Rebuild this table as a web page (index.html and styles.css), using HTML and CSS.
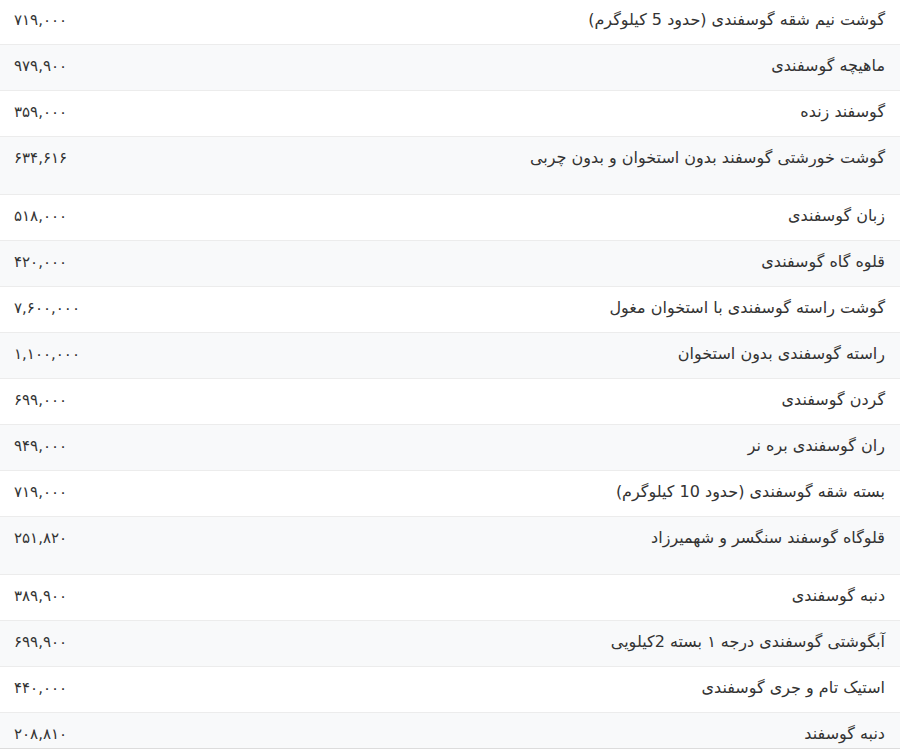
FILE: index.html
```html
<!DOCTYPE html>
<html lang="fa" dir="rtl">
<head>
<meta charset="utf-8">
<title>قیمت گوشت گوسفندی</title>
<link rel="stylesheet" href="styles.css">
</head>
<body>
<div class="list">
  <div class="row"><span class="name">گوشت نیم شقه گوسفندی (حدود 5 کیلوگرم)</span><span class="price">۷۱۹,۰۰۰</span></div>
  <div class="row"><span class="name">ماهیچه گوسفندی</span><span class="price">۹۷۹,۹۰۰</span></div>
  <div class="row"><span class="name">گوسفند زنده</span><span class="price">۳۵۹,۰۰۰</span></div>
  <div class="row tall"><span class="name">گوشت خورشتی گوسفند بدون استخوان و بدون چربی</span><span class="price">۶۳۴,۶۱۶</span></div>
  <div class="row"><span class="name">زبان گوسفندی</span><span class="price">۵۱۸,۰۰۰</span></div>
  <div class="row"><span class="name">قلوه گاه گوسفندی</span><span class="price">۴۲۰,۰۰۰</span></div>
  <div class="row"><span class="name">گوشت راسته گوسفندی با استخوان مغول</span><span class="price">۷,۶۰۰,۰۰۰</span></div>
  <div class="row"><span class="name">راسته گوسفندی بدون استخوان</span><span class="price">۱,۱۰۰,۰۰۰</span></div>
  <div class="row"><span class="name">گردن گوسفندی</span><span class="price">۶۹۹,۰۰۰</span></div>
  <div class="row"><span class="name">ران گوسفندی بره نر</span><span class="price">۹۴۹,۰۰۰</span></div>
  <div class="row"><span class="name">بسته شقه گوسفندی (حدود 10 کیلوگرم)</span><span class="price">۷۱۹,۰۰۰</span></div>
  <div class="row tall"><span class="name">قلوگاه گوسفند سنگسر و شهمیرزاد</span><span class="price">۲۵۱,۸۲۰</span></div>
  <div class="row"><span class="name">دنبه گوسفندی</span><span class="price">۳۸۹,۹۰۰</span></div>
  <div class="row"><span class="name">آبگوشتی گوسفندی درجه ۱ بسته 2کیلویی</span><span class="price">۶۹۹,۹۰۰</span></div>
  <div class="row"><span class="name">استیک تام و جری گوسفندی</span><span class="price">۴۴۰,۰۰۰</span></div>
  <div class="row"><span class="name">دنبه گوسفند</span><span class="price">۲۰۸,۸۱۰</span></div>
</div>
</body>
</html>
```

FILE: styles.css
```css
html, body {
  margin: 0;
  padding: 0;
  background: #ffffff;
}

body {
  font-family: "DejaVu Sans", "Noto Sans", sans-serif;
  font-size: 16px;
  color: #333333;
}

.list {
  display: flex;
  flex-direction: column;
  margin-top: -1px;
  border-bottom: 1px solid #dcdcdc;
}

.row {
  display: flex;
  justify-content: space-between;
  align-items: flex-start;
  box-sizing: border-box;
  height: 46px;
  padding: 9px 15px 0 14px;
  line-height: 24px;
  border-bottom: 1px solid #ececec;
  background: #ffffff;
}

.row:nth-child(even) {
  background: #f8f9fa;
}

.row.tall {
  height: 58px;
}

.row:last-child {
  height: 35px;
  border-bottom: none;
}

.price {
  font-size: 15px;
  direction: rtl;
  unicode-bidi: plaintext;
}
```
